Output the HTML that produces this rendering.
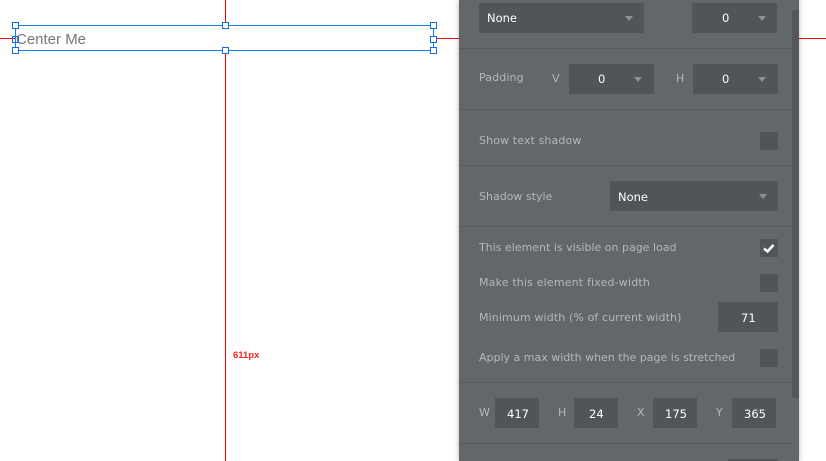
<!DOCTYPE html>
<html><head><meta charset="utf-8"><style>
html,body{margin:0;padding:0;width:826px;height:461px;overflow:hidden;background:#fff}
body{position:relative;font-family:"DejaVu Sans",sans-serif}
div{position:absolute;box-sizing:border-box}
.r{background:#f00}
.b{background:#1a7fe8}
.h{width:7px;height:7px;border:1px solid #0a6cf0;background:#fff0}
.w{background:#fff}
.panel{left:459px;top:0;width:340px;height:461px;background:#62676a;box-shadow:0 0 5px rgba(0,0,0,.3)}
.d{left:459px;width:333px;height:1px;background:#575b5e}
.f{background:#515559}
.t{font-size:11px;color:#b2b8bb;line-height:16px;white-space:nowrap}
.v{font-size:11.5px;color:#fff;line-height:16px;white-space:nowrap}
.a{width:0;height:0;border-left:4.5px solid transparent;border-right:4.5px solid transparent;border-top:5px solid #8d9194}
</style></head><body>
<div class="r" style="left:0;top:38px;width:15px;height:1px"></div>
<div class="r" style="left:435px;top:38px;width:24px;height:1px"></div>
<div class="r" style="left:799px;top:38px;width:27px;height:1px"></div>
<div class="r" style="left:225px;top:0;width:1px;height:25px"></div>
<div class="r" style="left:225px;top:50px;width:1px;height:411px"></div>
<div style="left:16px;top:30px;font:15px/20px 'Liberation Sans',sans-serif;color:#777;white-space:nowrap">Center Me</div>
<div class="b" style="left:15px;top:25px;width:419px;height:1px"></div>
<div class="b" style="left:15px;top:50px;width:419px;height:1px"></div>
<div class="b" style="left:15px;top:25px;width:1px;height:26px"></div>
<div class="b" style="left:433px;top:25px;width:1px;height:26px"></div>
<div class="h" style="left:12px;top:22px;background:#fff"></div>
<div class="h" style="left:222px;top:22px;background:#fff"></div>
<div class="h" style="left:430px;top:22px;background:#fff"></div>
<div class="h" style="left:12px;top:36px"></div>
<div class="h" style="left:430px;top:36px;background:#fff"></div>
<div class="h" style="left:12px;top:47px;background:#fff"></div>
<div class="h" style="left:222px;top:47px;background:#fff"></div>
<div class="h" style="left:430px;top:47px;background:#fff"></div>
<div style="left:233px;top:350px;font:bold 9.5px/12px 'Liberation Sans',sans-serif;color:#f22;white-space:nowrap">611px</div>

<div class="panel"></div>
<div style="left:792px;top:10px;width:7px;height:388px;background:#54585b"></div>
<div class="d" style="top:48px"></div>
<div class="d" style="top:109px"></div>
<div class="d" style="top:165px"></div>
<div class="d" style="top:226px"></div>
<div class="d" style="top:382px"></div>
<div class="d" style="top:443px"></div>

<div class="f" style="left:479px;top:3px;width:165px;height:30px"></div>
<div class="v" style="left:487px;top:10px">None</div>
<div class="a" style="left:625px;top:16px"></div>
<div class="f" style="left:692px;top:3px;width:85px;height:30px"></div>
<div class="v" style="left:722px;top:10px">0</div>
<div class="a" style="left:758px;top:16px"></div>

<div class="t" style="left:479px;top:70px;letter-spacing:.12px">Padding</div>
<div class="t" style="left:552px;top:71px">V</div>
<div class="f" style="left:569px;top:64px;width:85px;height:30px"></div>
<div class="v" style="left:598px;top:71px">0</div>
<div class="a" style="left:634px;top:77px"></div>
<div class="t" style="left:676px;top:71px">H</div>
<div class="f" style="left:693px;top:64px;width:85px;height:30px"></div>
<div class="v" style="left:722px;top:71px">0</div>
<div class="a" style="left:758px;top:77px"></div>

<div class="t" style="left:479px;top:133px;letter-spacing:.12px">Show text shadow</div>
<div class="f" style="left:760px;top:132px;width:18px;height:18px"></div>

<div class="t" style="left:479px;top:189px">Shadow style</div>
<div class="f" style="left:610px;top:181px;width:168px;height:30px"></div>
<div class="v" style="left:618px;top:189px">None</div>
<div class="a" style="left:759px;top:194px"></div>

<div class="t" style="left:479px;top:240px">This element is visible on page load</div>
<div class="f" style="left:760px;top:239px;width:18px;height:18px"></div>
<svg style="position:absolute;left:760px;top:239px" width="18" height="18"><path d="M4 9.5L7.5 12.5L13.5 6" fill="none" stroke="#fff" stroke-width="2.6"/></svg>

<div class="t" style="left:479px;top:275px;letter-spacing:.17px">Make this element fixed-width</div>
<div class="f" style="left:760px;top:274px;width:18px;height:18px"></div>

<div class="t" style="left:479px;top:310px;letter-spacing:.12px">Minimum width (% of current width)</div>
<div class="f" style="left:718px;top:302px;width:60px;height:30px"></div>
<div class="v" style="left:741px;top:310px">71</div>

<div class="t" style="left:479px;top:350px">Apply a max width when the page is stretched</div>
<div class="f" style="left:760px;top:349px;width:18px;height:18px"></div>

<div class="t" style="left:479px;top:405px">W</div>
<div class="f" style="left:495px;top:398px;width:44px;height:30px"></div>
<div class="v" style="left:507px;top:406px">417</div>
<div class="t" style="left:558px;top:405px">H</div>
<div class="f" style="left:574px;top:398px;width:44px;height:30px"></div>
<div class="v" style="left:589px;top:406px">24</div>
<div class="t" style="left:637px;top:405px">X</div>
<div class="f" style="left:653px;top:398px;width:44px;height:30px"></div>
<div class="v" style="left:665px;top:406px">175</div>
<div class="t" style="left:716px;top:405px">Y</div>
<div class="f" style="left:732px;top:398px;width:44px;height:30px"></div>
<div class="v" style="left:744px;top:406px">365</div>

<div class="f" style="left:728px;top:459px;width:50px;height:2px"></div>
</body></html>
